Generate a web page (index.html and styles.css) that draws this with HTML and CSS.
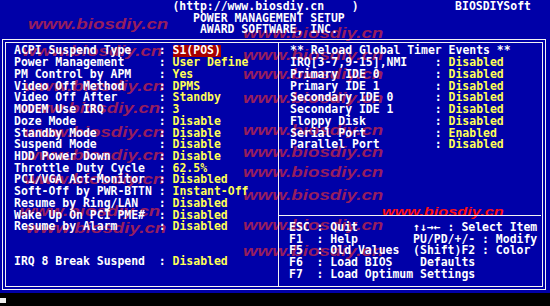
FILE: index.html
```html
<!DOCTYPE html>
<html lang="en">
<head>
  <meta charset="UTF-8" />
  <title>Power Management Setup</title>
  <link rel="stylesheet" href="styles.css">
</head>
<body>
  <div class="screen" id="screen">
    <div class="marks" id="marks"></div>

    <div class="header">
      <div class="line">                         (http://www.biosdiy.cn    )              BIOSDIYSoft</div>
      <div class="line">                            POWER MANAGEMENT SETUP</div>
      <div class="line">                             AWARD SOFTWARE, INC.</div>
    </div>

    <div class="frame">
      <div class="pane left">
        <div class="item"><span>ACPI Suspend Type</span><span>:</span><span class="value"><span class="sel">S1(POS)</span></span></div>
        <div class="item"><span>Power Management</span><span>:</span><span class="value">User Define</span></div>
        <div class="item"><span>PM Control by APM</span><span>:</span><span class="value">Yes</span></div>
        <div class="item"><span>Video Off Method</span><span>:</span><span class="value">DPMS</span></div>
        <div class="item"><span>Video Off After</span><span>:</span><span class="value">Standby</span></div>
        <div class="item"><span>MODEM Use IRQ</span><span>:</span><span class="value">3</span></div>
        <div class="item"><span>Doze Mode</span><span>:</span><span class="value">Disable</span></div>
        <div class="item"><span>Standby Mode</span><span>:</span><span class="value">Disable</span></div>
        <div class="item"><span>Suspend Mode</span><span>:</span><span class="value">Disable</span></div>
        <div class="item"><span>HDD Power Down</span><span>:</span><span class="value">Disable</span></div>
        <div class="item"><span>Throttle Duty Cycle</span><span>:</span><span class="value">62.5%</span></div>
        <div class="item"><span>PCI/VGA Act-Monitor</span><span>:</span><span class="value">Disabled</span></div>
        <div class="item"><span>Soft-Off by PWR-BTTN</span><span>:</span><span class="value">Instant-Off</span></div>
        <div class="item"><span>Resume by Ring/LAN</span><span>:</span><span class="value">Disabled</span></div>
        <div class="item"><span>Wake Up On PCI PME#</span><span>:</span><span class="value">Disabled</span></div>
        <div class="item"><span>Resume by Alarm</span><span>:</span><span class="value">Disabled</span></div>
        <div class="item"></div>
        <div class="item"></div>
        <div class="item"><span>IRQ 8 Break Suspend</span><span>:</span><span class="value">Disabled</span></div>
      </div>

      <div class="pane right">
        <div class="events">
          <div class="item"><span class="title">** Reload Global Timer Events **</span></div>
          <div class="item"><span>IRQ[3-7,9-15],NMI</span><span>:</span><span class="value">Disabled</span></div>
          <div class="item"><span>Primary IDE 0</span><span>:</span><span class="value">Disabled</span></div>
          <div class="item"><span>Primary IDE 1</span><span>:</span><span class="value">Disabled</span></div>
          <div class="item"><span>Secondary IDE 0</span><span>:</span><span class="value">Disabled</span></div>
          <div class="item"><span>Secondary IDE 1</span><span>:</span><span class="value">Disabled</span></div>
          <div class="item"><span>Floppy Disk</span><span>:</span><span class="value">Disabled</span></div>
          <div class="item"><span>Serial Port</span><span>:</span><span class="value">Enabled</span></div>
          <div class="item"><span>Parallel Port</span><span>:</span><span class="value">Disabled</span></div>
        </div>
        <div class="help">
          <div class="line">ESC : Quit        ↑↓→← : Select Item</div>
          <div class="line">F1  : Help        PU/PD/+/- : Modify</div>
          <div class="line">F5  : Old Values  (Shift)F2 : Color</div>
          <div class="line">F6  : Load BIOS    Defaults</div>
          <div class="line">F7  : Load Optimum Settings</div>
        </div>
      </div>
    </div>
  </div>
  <div class="cursor"></div>

  <script>
    // watermark spots over the screen
    const spots = [
      [28, 16], [243, 25], [22, 43], [243, 47], [243, 66], [24, 78],
      [243, 90], [20, 100], [243, 122], [24, 124], [243, 144], [24, 147],
      [243, 164], [24, 171], [243, 187], [20, 203], [243, 217], [26, 220],
      [243, 243]
    ];
    const marks = document.getElementById("marks");

    spots.forEach(([x, y]) => {
      const mark = document.createElement("span");
      mark.className = "mark";
      mark.textContent = "www.biosdiy.cn";
      mark.style.left = x + "px";
      mark.style.top = y + "px";
      marks.appendChild(mark);
    });

    const hot = document.createElement("span");
    hot.className = "mark hot";
    hot.textContent = "www.biosdiy.cn";
    hot.style.left = "382px";
    hot.style.top = "205px";
    marks.appendChild(hot);
  </script>
</body>
</html>
```

FILE: styles.css
```css
body {
  margin: 0;
  background-color: #000;
  font-family: 'DejaVu Sans Mono', 'Liberation Mono', monospace;
  font-size: 11.46px;
  font-weight: bold;
  line-height: 11.72px;
  color: #fff;
  overflow: hidden;
}

.screen {
  position: relative;
  width: 550px;
  height: 293px;
  background-color: #0000a8;
  overflow: hidden;
}

.marks {
  position: absolute;
  inset: 0;
}

.mark {
  position: absolute;
  font-family: 'Liberation Sans', Arial, sans-serif;
  font-size: 15px;
  line-height: 15px;
  font-style: italic;
  font-weight: bold;
  color: #961e5e;
  white-space: nowrap;
  transform: scaleX(1.25);
  transform-origin: left top;
}

.mark.hot {
  font-size: 13px;
  line-height: 13px;
  color: #ff1010;
}

.header {
  position: relative;
  padding-top: 1px;
}

.line {
  white-space: pre;
  height: 11.72px;
}

.frame {
  position: relative;
  display: grid;
  grid-template-columns: 272px 263px;
  width: 536px;
  height: 243px;
  margin: 2.84px 0 0 2px;
  border: 4px double #f4f4f4;
}

.pane.left {
  padding: 2.5px 0 0 8px;
}

.pane.right {
  display: flex;
  flex-direction: column;
  border-left: 1px solid #f4f4f4;
}

.events {
  height: 173px;
  box-sizing: border-box;
  padding: 2.5px 0 0 11px;
  border-bottom: 1px solid #f4f4f4;
}

.help {
  padding: 5.8px 0 0 10px;
}

.item {
  display: grid;
  grid-template-columns: 21ch 2ch auto;
  height: 11.72px;
  white-space: pre;
}

.item .title {
  grid-column: 1 / 4;
}

.value {
  color: #ffff55;
}

.sel {
  display: inline-block;
  background-color: #a80000;
  color: #fff;
}

.cursor {
  width: 6px;
  height: 5px;
  margin-top: 5px;
  background-color: #eee;
}
```
